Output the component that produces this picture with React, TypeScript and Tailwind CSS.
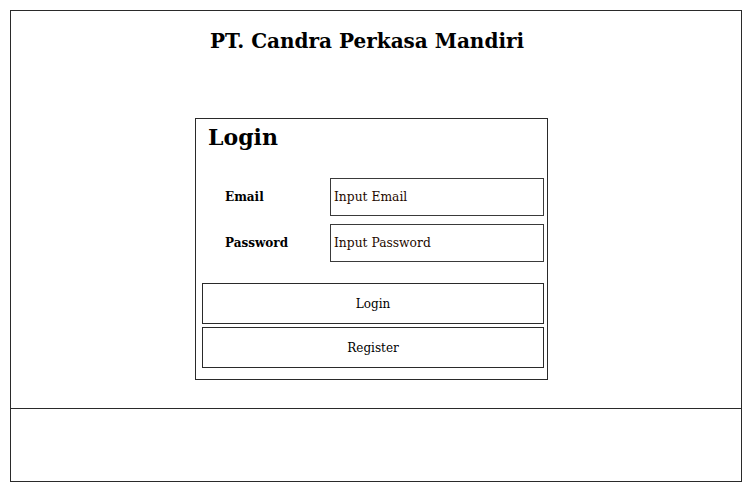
import React from "react";

const serif = { fontFamily: '"DejaVu Serif", "Liberation Serif", serif' };

export default function App() {
  return (
    <div className="w-[752px] h-[491px] bg-white pt-[10px] pl-[10px]" style={serif}>
      <div className="w-[732px] h-[472px] border border-[#2a2a2a] flex flex-col">
        <div className="h-[398px] border-b border-[#2a2a2a] flex flex-col">
          <h1 className="text-[20px] leading-[24px] font-bold text-black text-center pt-[18px] pr-[18px]">
            PT. Candra Perkasa Mandiri
          </h1>
          <div className="ml-[184px] mt-[65px] w-[353px] h-[262px] border border-[#2a2a2a] flex flex-col pl-[6px] pr-[3px]">
            <h2 className="text-[22px] leading-[28px] font-bold text-black pt-[4px] pl-[6px]">Login</h2>
            <div className="mt-[27px] flex flex-col gap-[8px]">
              <div className="flex items-center">
                <span className="w-[128px] pl-[23px] text-[12px] font-bold text-black">Email</span>
                <div className="w-[214px] h-[38px] border border-[#3a3a3a] flex items-center pl-[3px] text-[12.3px] text-[#1f0a00]">
                  Input Email
                </div>
              </div>
              <div className="flex items-center">
                <span className="w-[128px] pl-[23px] text-[12px] font-bold text-black">Password</span>
                <div className="w-[214px] h-[38px] border border-[#3a3a3a] flex items-center pl-[3px] text-[12.3px] text-[#1f0a00]">
                  Input Password
                </div>
              </div>
            </div>
            <div className="mt-[21px] flex flex-col gap-[3px]">
              <div className="w-[342px] h-[41px] border border-[#2a2a2a] flex items-center justify-center text-[12px] text-black">
                Login
              </div>
              <div className="w-[342px] h-[41px] border border-[#2a2a2a] flex items-center justify-center text-[12px] text-black">
                Register
              </div>
            </div>
          </div>
        </div>
        <div className="flex-1"></div>
      </div>
    </div>
  );
}
